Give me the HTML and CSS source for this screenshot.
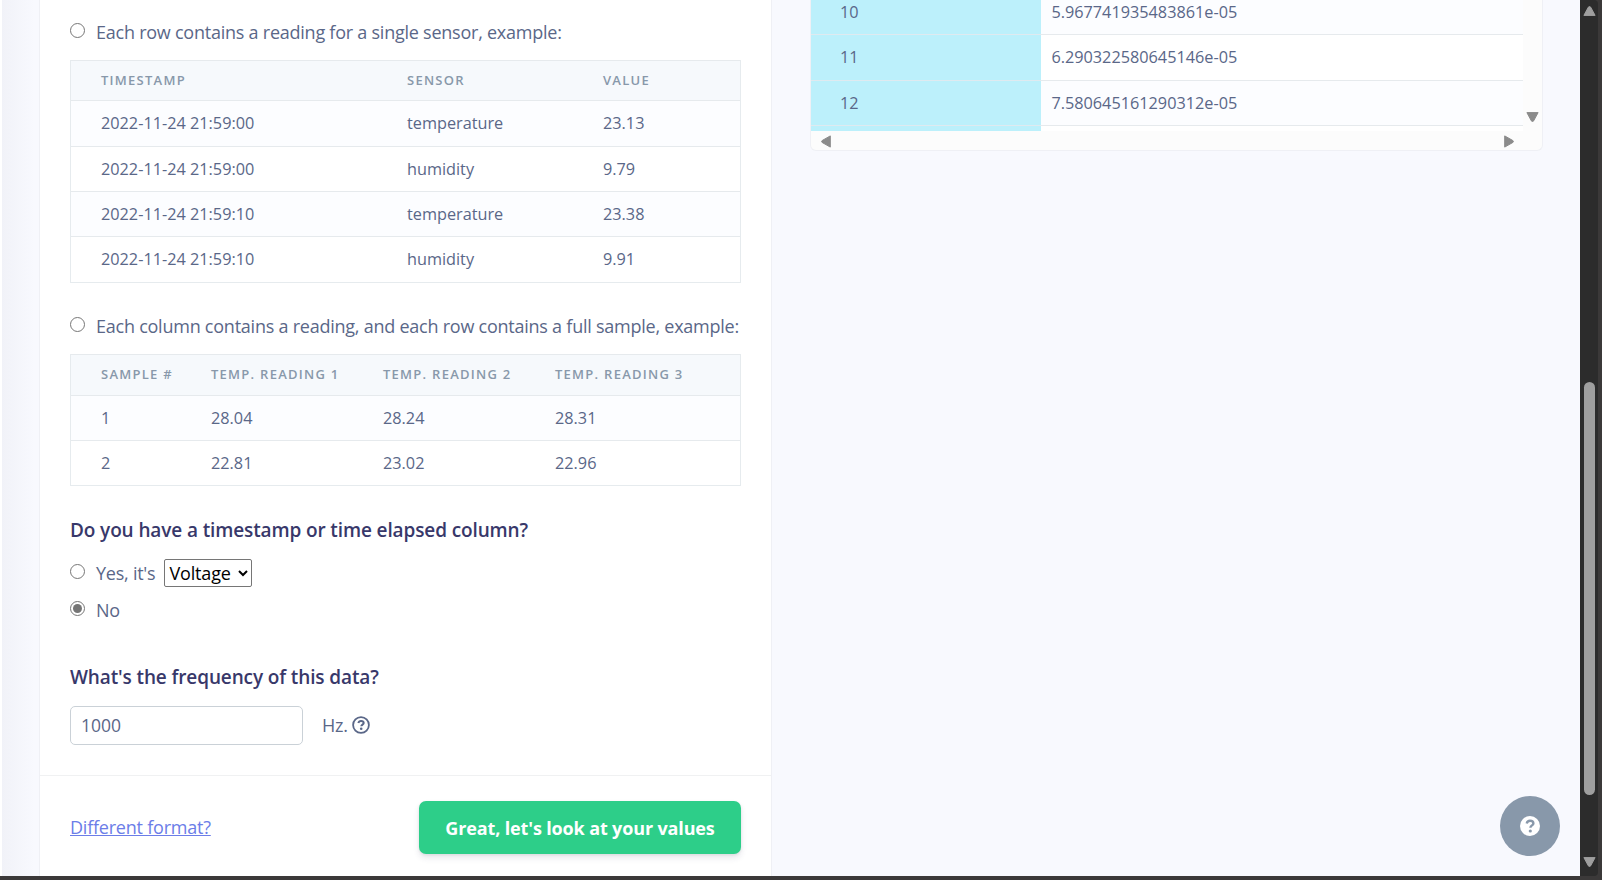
FILE: index.html
```html
<!DOCTYPE html>
<html lang="en">
<head>
<meta charset="utf-8">
<title>CSV Wizard</title>
<link rel="stylesheet" href="styles.css">
</head>
<body>
<div class="window">
  <main class="page">
    <div class="edge"></div>
    <section class="card wizard">
      <div class="wizard-body">
        <label class="option option-row"><input type="radio" name="layout"><span>Each row contains a reading for a single sensor, example:</span></label>
        <table class="sample sensors">
          <colgroup><col class="c-time"><col class="c-sensor"><col></colgroup>
          <thead><tr><th>Timestamp</th><th>Sensor</th><th>Value</th></tr></thead>
          <tbody>
            <tr class="tall"><td>2022-11-24 21:59:00</td><td>temperature</td><td>23.13</td></tr>
            <tr><td>2022-11-24 21:59:00</td><td>humidity</td><td>9.79</td></tr>
            <tr><td>2022-11-24 21:59:10</td><td>temperature</td><td>23.38</td></tr>
            <tr class="tall"><td>2022-11-24 21:59:10</td><td>humidity</td><td>9.91</td></tr>
          </tbody>
        </table>
        <label class="option option-column"><input type="radio" name="layout"><span>Each column contains a reading, and each row contains a full sample, example:</span></label>
        <table class="sample readings">
          <colgroup><col class="c-sample"><col class="c-reading"><col class="c-reading"><col></colgroup>
          <thead><tr><th>Sample #</th><th>Temp. reading 1</th><th>Temp. reading 2</th><th>Temp. reading 3</th></tr></thead>
          <tbody>
            <tr><td>1</td><td>28.04</td><td>28.24</td><td>28.31</td></tr>
            <tr><td>2</td><td>22.81</td><td>23.02</td><td>22.96</td></tr>
          </tbody>
        </table>
        <h4 class="q-time">Do you have a timestamp or time elapsed column?</h4>
        <div class="option option-yes"><input type="radio" name="time" id="yes"><label for="yes">Yes, it's</label><select><option>Voltage</option></select></div>
        <label class="option option-no"><input type="radio" name="time" checked><span>No</span></label>
        <h4 class="q-freq">What's the frequency of this data?</h4>
        <div class="freq">
          <input class="freq-input" type="text" value="1000">
          <span class="unit">Hz.</span>
          <svg class="help" viewBox="0 0 18 18"><circle cx="9" cy="9" r="7.9" fill="none" stroke="currentColor" stroke-width="1.8"/><path d="M6.3 7.1C6.7 5.6 7.8 4.9 9 4.9c1.5 0 2.7.9 2.7 2.1 0 1.6-2.4 1.7-2.4 3.3" fill="none" stroke="currentColor" stroke-width="2"/><circle cx="9.2" cy="12.8" r="1.3" fill="currentColor"/></svg>
        </div>
      </div>
      <footer class="wizard-footer">
        <a class="link" href="#">Different format?</a>
        <button class="next" type="button">Great, let's look at your values</button>
      </footer>
    </section>
    <section class="card preview">
      <div class="preview-main">
        <table class="data">
          <colgroup><col class="c-index"><col></colgroup>
          <tbody>
            <tr class="cut-top"><td>10</td><td>5.967741935483861e-05</td></tr>
            <tr class="tall"><td>11</td><td>6.290322580645146e-05</td></tr>
            <tr><td>12</td><td>7.580645161290312e-05</td></tr>
            <tr class="cut-bottom"><td></td><td></td></tr>
          </tbody>
        </table>
        <div class="vbar"><svg width="13" height="10" viewBox="0 0 13 10"><path d="M.9.6h11.2L7.6 8.9q-1.1 1.2-2.2 0z" fill="#8b8b8b" stroke="#8b8b8b" stroke-linejoin="round"/></svg></div>
      </div>
      <div class="hbar">
        <svg width="10" height="13" viewBox="0 0 10 13"><path d="M9.3.9v11.2L1.2 7.5q-1.3-1 0-2z" fill="#8b8b8b" stroke="#8b8b8b" stroke-linejoin="round"/></svg>
        <svg width="10" height="13" viewBox="0 0 10 13"><path d="M.7.9v11.2L8.8 7.5q1.3-1 0-2z" fill="#8b8b8b" stroke="#8b8b8b" stroke-linejoin="round"/></svg>
      </div>
    </section>
    <button class="chat" type="button" aria-label="Help"><svg width="20" height="20" viewBox="0 0 20 20"><circle cx="10" cy="10" r="10" fill="#fff"/><path d="M6.7 7.4C7.1 5.7 8.5 4.8 10 4.8c1.9 0 3.4 1 3.4 2.6 0 1.9-3 2.1-3 4.3" fill="none" stroke="#8898aa" stroke-width="2.4"/><circle cx="10.3" cy="15" r="1.6" fill="#8898aa"/></svg></button>
  </main>
  <aside class="scrollbar">
    <svg width="13" height="10" viewBox="0 0 13 10"><path d="M.9 9.4h11.2L7.6 1.1q-1.1-1.2-2.2 0z" fill="#9f9f9f" stroke="#9f9f9f" stroke-linejoin="round"/></svg>
    <div class="thumb"></div>
    <svg width="13" height="10" viewBox="0 0 13 10"><path d="M.9.6h11.2L7.6 8.9q-1.1 1.2-2.2 0z" fill="#9f9f9f" stroke="#9f9f9f" stroke-linejoin="round"/></svg>
  </aside>
</div>
</body>
</html>
```
FILE: styles.css
```css
* { box-sizing: border-box; }
body {
  margin: 0;
  height: 880px;
  overflow: hidden;
  background: #3b3939;
  color: #5a6788;
  font: 400 18px/27px "Open Sans", "Noto Sans", sans-serif;
}
.window { display: flex; width: 1598px; height: 876px; }
.page {
  position: relative;
  display: flex;
  align-items: flex-start;
  width: 1580px;
  height: 876px;
  background: #f8f9fe;
}
.edge {
  width: 39px;
  height: 876px;
  border-left: 2px solid #fff;
  background: linear-gradient(90deg, #f1f2f8, #f8f9fe 32px);
}
.card { background: #fff; border: 1px solid #eff0f5; border-top: 0; }
.wizard { width: 733px; height: 876px; border-bottom: 0; }
.wizard-body { height: 775px; padding: 19px 30px 0; }
.option { display: flex; align-items: flex-start; height: 27px; white-space: nowrap; letter-spacing: -.24px; }
.option input { width: 15px; height: 15px; margin: 4px 11px 0 0; flex: none; accent-color: #767676; }
.option-row input { margin-top: 3.5px; }
.option select {
  height: 28px;
  width: 88px;
  margin: -1px 0 0 9px;
  padding: 0;
  border: 1px solid #767676;
  border-radius: 2px;
  background: #fff;
  color: #000;
  font: 400 18px "Open Sans", sans-serif;
  letter-spacing: -.15px;
}

table { border-spacing: 0; table-layout: fixed; font-size: 16.25px; line-height: 24px; font-weight: 400; }
.sample { width: 671px; margin-top: 14px; border: 1px solid #e6ebee; border-top: 0; }
.sample tr, .data tr { height: 45px; }
.sample .tall, .data .tall { height: 46px; }
.sensors thead tr { height: 40px; }
.readings thead tr { height: 41px; }
td, th { padding: 10px 0 0; border-top: 1px solid #e6eaed; text-align: left; vertical-align: top; }
.sample td:first-child, .sample th:first-child { padding-left: 30px; }
th {
  padding-top: 7px;
  background: #f6f9fc;
  color: #8898aa;
  font-size: 13px;
  font-weight: 600;
  letter-spacing: 1.26px;
  text-transform: uppercase;
  white-space: nowrap;
}
tbody tr:nth-child(odd) { background: #fcfdff; }
.c-time { width: 336px; }
.c-sensor { width: 196px; }
.c-sample { width: 140px; }
.c-reading { width: 172px; }
.option-column { margin-top: 30px; }

h4 { margin: 0; color: #38386a; font-size: 19px; line-height: 28px; font-weight: 600; letter-spacing: -.12px; }
.q-time { margin-top: 30px; }
.option-yes { height: 28px; margin-top: 16px; }
.option-yes input { margin-top: 4px; }
.option-no { margin-top: 9px; }
.option-no input { margin-top: 3.5px; }
.q-freq { margin-top: 39px; }
.freq { display: flex; align-items: center; margin-top: 15px; }
.freq-input {
  width: 233px;
  height: 39px;
  padding: 0 10px 1px;
  border: 1px solid #cad1d7;
  border-radius: 5px;
  color: #5a6788;
  font: 400 17.5px "Open Sans", sans-serif;
}
.unit { margin-left: 19px; letter-spacing: -.2px; }
.help { width: 18px; height: 18px; margin: 0 0 2px 4px; }
.wizard-footer {
  display: flex;
  justify-content: space-between;
  align-items: flex-start;
  height: 101px;
  padding: 25px 30px 0;
  border-top: 1px solid #f0f1f2;
}
.link { margin-top: 13px; color: #6b7de8; letter-spacing: -.22px; }
.next {
  width: 322px;
  height: 53px;
  padding: 0;
  border: 0;
  border-radius: 7px;
  background: #2dce89;
  box-shadow: 0 4px 6px rgba(50, 50, 93, .11), 0 1px 3px rgba(0, 0, 0, .08);
  color: #fff;
  font: 700 18px "Open Sans", sans-serif;
  letter-spacing: -.14px;
}

.preview { width: 733px; height: 151px; margin-left: 38px; border-radius: 0 0 6px 6px; background: #fcfcfc; overflow: hidden; }
.preview-main { display: flex; height: 131px; }
.data { width: 712px; height: 131px; background: #fff; }
.data td:first-child { padding-left: 29px; background: #bcf0fb; border-color: #dfeaf0; }
.data td:last-child { padding-left: 10.4px; }
.data .cut-top { height: 34px; }
.data .cut-top td { padding-top: 0; border-top: 0; }
.data .cut-bottom { height: 6px; }
.data .cut-bottom td { padding-top: 5px; }
.c-index { width: 230px; }
.vbar { display: flex; width: 19px; justify-content: center; padding-top: 112px; }
.vbar svg { flex: none; }
.hbar { display: flex; justify-content: space-between; height: 19px; padding: 3.5px 28px 0 9.5px; }

.chat {
  position: absolute;
  right: 20px;
  bottom: 20px;
  display: flex;
  align-items: center;
  justify-content: center;
  width: 60px;
  height: 60px;
  padding: 0 0 1px;
  border: 0;
  border-radius: 50%;
  background: #8898aa;
}
.scrollbar {
  display: flex;
  flex-direction: column;
  align-items: center;
  width: 18px;
  height: 876px;
  padding-top: 6px;
  border-radius: 0 4px 4px 0;
  background: #2c2c2c;
}
.thumb { width: 11px; height: 413px; margin: 366px 0 62px; border-radius: 6px; background: #9f9f9f; }
```
